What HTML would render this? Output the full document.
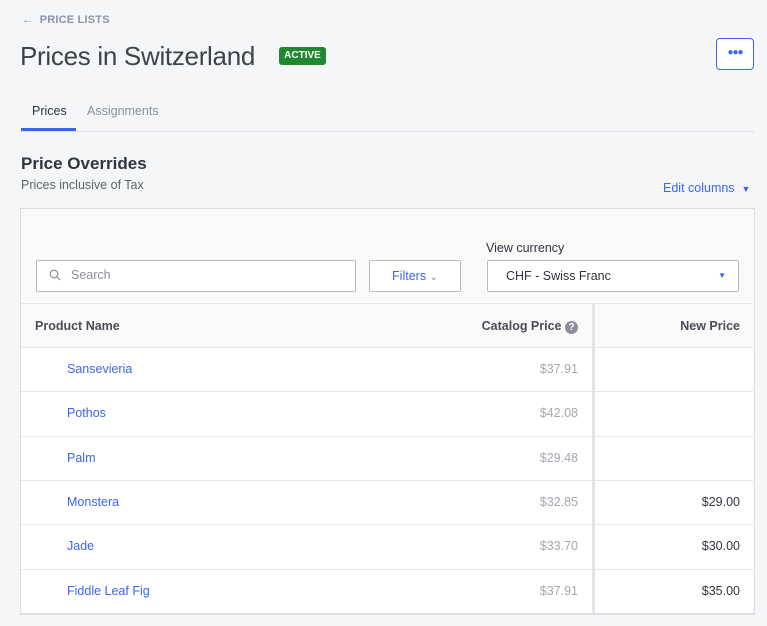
<!DOCTYPE html>
<html><head><style>
body{margin:0;width:767px;height:626px;background:#f5f6f8;font-family:"Liberation Sans",sans-serif;position:relative;overflow:hidden;color:#313440}
.a{position:absolute}
.row{position:absolute;left:21px;width:732px;height:44px;border-top:1px solid #e5e6ea;background:#fff;font-size:12.5px}
.row .n{position:absolute;left:46px;top:14px;color:#3c64f4}
.row .c{position:absolute;right:175px;top:14px;color:#a4a7b0}
.row .p{position:absolute;right:13px;top:14px;color:#313440}
</style></head><body>
<div class="a" style="left:22px;top:14px;font-size:11px;color:#8c93ad;font-weight:bold;letter-spacing:.2px">&#8592;&nbsp; PRICE LISTS</div>
<div class="a" style="left:20px;top:41px;font-size:26px;color:#3f424d;letter-spacing:-0.3px">Prices in Switzerland</div>
<div class="a" style="left:279px;top:47px;width:47px;height:18px;background:#208831;border-radius:3px;color:#fff;font-size:10px;font-weight:bold;text-align:center;line-height:18px">ACTIVE</div>
<div class="a" style="left:716px;top:38px;width:36px;height:30px;border:1px solid #3c64f4;border-radius:4px;background:#fff;color:#3c64f4;text-align:center;line-height:28px;font-weight:bold;font-size:10px;letter-spacing:-1px">●●●</div>
<div class="a" style="left:32px;top:104px;font-size:12.5px">Prices</div>
<div class="a" style="left:87px;top:104px;font-size:12.5px;color:#8c8f99">Assignments</div>
<div class="a" style="left:21px;top:131px;width:733px;height:1px;background:#dcdee4"></div>
<div class="a" style="left:21px;top:128px;width:55px;height:3px;background:#3c64f4"></div>
<div class="a" style="left:21px;top:154px;font-size:17px;font-weight:bold">Price Overrides</div>
<div class="a" style="left:21px;top:178px;font-size:12.5px;color:#5e6270">Prices inclusive of Tax</div>
<div class="a" style="left:663px;top:181px;font-size:12.5px;color:#3c64f4">Edit columns &nbsp;<span style="font-size:9px">▼</span></div>
<div class="a" style="left:20px;top:208px;width:733px;height:405px;border:1px solid #dcdee4;background:#f9f9fa"></div>
<div class="a" style="left:486px;top:241px;font-size:12.5px">View currency</div>
<div class="a" style="left:36px;top:260px;width:318px;height:30px;border:1px solid #b7b9c1;border-radius:2px;background:#fff"></div>
<svg class="a" style="left:49px;top:269px" width="12" height="12"><circle cx="5" cy="5" r="3.8" fill="none" stroke="#999" stroke-width="1.3"/><line x1="8" y1="8" x2="11" y2="11" stroke="#999" stroke-width="1.3"/></svg>
<div class="a" style="left:71px;top:268px;font-size:12.5px;color:#8c8f99">Search</div>
<div class="a" style="left:369px;top:260px;width:90px;height:30px;border:1px solid #b7b9c1;border-radius:2px;background:#fff;color:#3c64f4;font-size:12.5px;line-height:30px;text-align:center">Filters <span style="color:#888;font-size:10px">⌄</span></div>
<div class="a" style="left:487px;top:260px;width:250px;height:30px;border:1px solid #b7b9c1;border-radius:2px;background:#fff;font-size:12.5px;line-height:30px"><span style="margin-left:18px">CHF - Swiss Franc</span><span style="position:absolute;right:12px;top:0;color:#3c64f4;font-size:8px">▼</span></div>
<div class="a" style="left:21px;top:303px;width:732px;height:44px;border-top:1px solid #e5e6ea;background:#f9f9fa;font-size:12.5px;font-weight:bold;color:#4a4d57">
<span class="a" style="left:14px;top:15px">Product Name</span>
<span class="a" style="right:175px;top:15px">Catalog Price <span style="display:inline-block;width:13px;height:13px;border-radius:50%;background:#8c8f99;color:#fff;font-size:10px;text-align:center;line-height:13px">?</span></span>
<span class="a" style="right:13px;top:15px">New Price</span></div>
<div class="row" style="top:347px"><span class="n">Sansevieria</span><span class="c">$37.91</span></div>
<div class="row" style="top:391px"><span class="n">Pothos</span><span class="c">$42.08</span></div>
<div class="row" style="top:436px"><span class="n">Palm</span><span class="c">$29.48</span></div>
<div class="row" style="top:480px"><span class="n">Monstera</span><span class="c">$32.85</span><span class="p">$29.00</span></div>
<div class="row" style="top:524px"><span class="n">Jade</span><span class="c">$33.70</span><span class="p">$30.00</span></div>
<div class="row" style="top:569px;height:44px"><span class="n">Fiddle Leaf Fig</span><span class="c">$37.91</span><span class="p">$35.00</span></div>
<div class="a" style="left:592px;top:303px;width:3px;height:310px;background:#e3e4e8"></div>
<div class="a" style="left:20px;top:613px;width:735px;height:1px;background:#dcdee4"></div>
</body></html>
